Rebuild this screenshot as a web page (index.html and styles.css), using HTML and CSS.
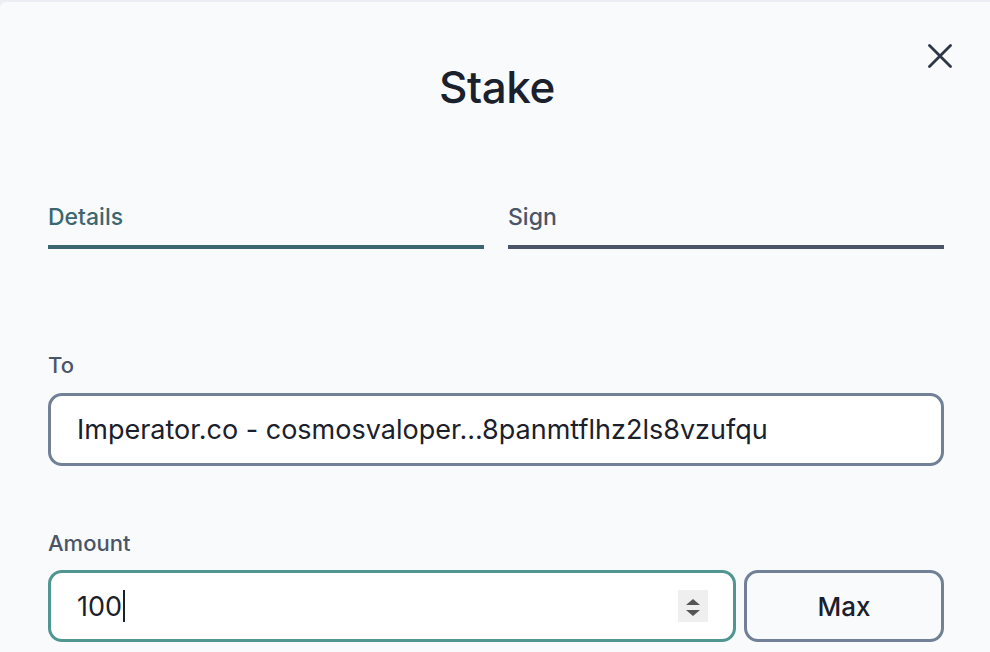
FILE: index.html
```html
<!DOCTYPE html>
<html lang="en">
<head>
<meta charset="utf-8">
<title>Stake</title>
<link rel="stylesheet" href="styles.css">
</head>
<body>
<div class="modal">
  <header class="header">
    <h1 class="title">Stake</h1>
    <button class="close" aria-label="Close">
      <svg width="24" height="24" viewBox="0 0 24 24"><path d="M1.5 1.5 L22.5 22.5 M22.5 1.5 L1.5 22.5" stroke="#2d3748" stroke-width="2.8" stroke-linecap="round" fill="none"/></svg>
    </button>
  </header>
  <nav class="tabs">
    <div class="tab tab-active">Details</div>
    <div class="tab">Sign</div>
  </nav>
  <div class="form">
    <div class="group">
      <label class="label">To</label>
      <div class="field">Imperator.co - cosmosvaloper...8panmtflhz2ls8vzufqu</div>
    </div>
    <div class="group group-amount">
      <label class="label">Amount</label>
      <div class="row">
        <div class="field field-focus">
          <span class="value">100</span><span class="caret"></span>
          <span class="spin">
            <svg width="30" height="32" viewBox="0 0 30 32"><path d="M15 9 L22 15 L8 15 Z" fill="#555"/><path d="M15 26 L22 20 L8 20 Z" fill="#555"/></svg>
          </span>
        </div>
        <button class="max">Max</button>
      </div>
    </div>
  </div>
</div>
</body>
</html>
```
FILE: styles.css
```css
* { box-sizing: border-box; }
html, body {
  margin: 0;
  padding: 0;
  background: #eceef5;
  font-family: Inter, "Noto Sans", sans-serif;
  color: #1a202c;
}
body { padding-top: 2px; height: 652px; overflow: hidden; }
.modal {
  background: #f8fafc;
  border-top-left-radius: 6px;
  height: 650px;
  padding: 59px 46px 0 48px;
}
.header {
  position: relative;
  display: flex;
  justify-content: center;
}
.title {
  margin: 0;
  font-size: 44px;
  line-height: 52px;
  font-weight: 500;
  color: #1a202c;
  letter-spacing: -0.01em;
  padding-left: 2px;
}
.close {
  position: absolute;
  right: -8px;
  top: -17px;
  width: 24px;
  height: 24px;
  padding: 0;
  border: 0;
  background: transparent;
  display: flex;
}
.tabs {
  display: flex;
  gap: 24px;
  margin-top: 90px;
}
.tab {
  flex: 1;
  font-size: 23px;
  line-height: 28px;
  font-weight: 500;
  color: #4a5568;
  padding-bottom: 14px;
  border-bottom: 4px solid #4a5568;
}
.tab-active {
  color: #3c6770;
  border-bottom-color: #3c6770;
}
.form {
  margin-top: 102px;
  display: flex;
  flex-direction: column;
  gap: 63px;
}
.group { display: flex; flex-direction: column; gap: 14px; }
.group-amount { gap: 13px; }
.label {
  font-size: 22px;
  line-height: 28px;
  font-weight: 500;
  color: #4a5568;
}
.field {
  height: 73px;
  border: 3px solid #718096;
  border-radius: 14px;
  background: #ffffff;
  display: flex;
  align-items: center;
  padding: 0 26px;
  font-size: 27px;
  color: #1a202c;
  position: relative;
}
.row { display: flex; gap: 8px; }
.row .field { flex: 1; height: 72px; }
.field-focus { border-color: #519591; }
.caret {
  display: inline-block;
  width: 2px;
  height: 32px;
  background: #1a202c;
  margin-left: 1px;
}
.spin {
  position: absolute;
  right: 25px;
  top: 17px;
  width: 30px;
  height: 32px;
  background: #efefef;
  display: flex;
}
.max {
  width: 200px;
  height: 72px;
  border: 3px solid #718096;
  border-radius: 14px;
  background: #f8fafc;
  font-family: Inter, "Noto Sans", sans-serif;
  font-size: 26px;
  font-weight: 500;
  color: #1a202c;
}
```
